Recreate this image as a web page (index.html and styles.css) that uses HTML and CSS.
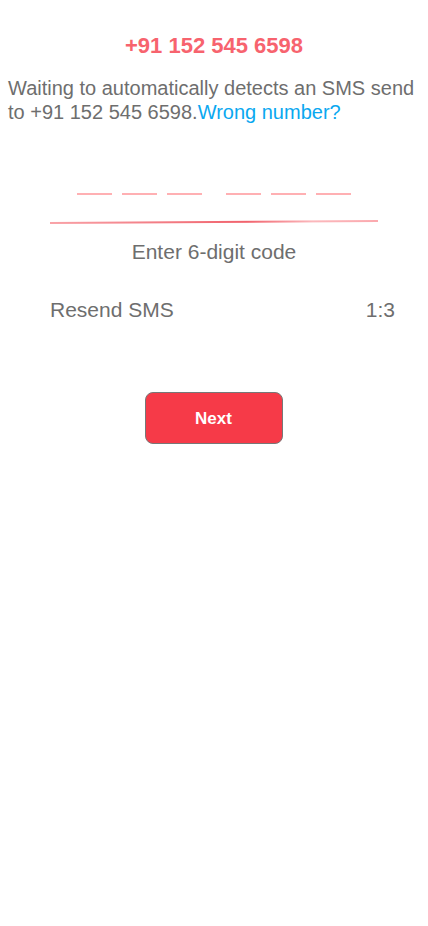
FILE: index.html
```html
<!DOCTYPE html>
<html>
<head>
<meta charset="utf-8">
<link rel="stylesheet" href="styles.css">
</head>
<body>
<div class="page">
  <h1 class="phone">+91 152 545 6598</h1>
  <p class="info">Waiting to automatically detects an SMS send to +91 152 545 6598.<a class="link" href="#">Wrong number?</a></p>
  <div class="code">
    <div class="dashes">
      <div class="group"><span class="dash"></span><span class="dash"></span><span class="dash"></span></div>
      <div class="group"><span class="dash"></span><span class="dash"></span><span class="dash"></span></div>
    </div>
    <div class="underline"></div>
    <div class="hint">Enter 6-digit code</div>
  </div>
  <div class="resend">
    <span>Resend SMS</span>
    <span>1:3</span>
  </div>
  <div class="actions">
    <button class="next">Next</button>
  </div>
</div>
</body>
</html>
```
FILE: styles.css
```css
html, body {
  margin: 0;
  padding: 0;
  background: #ffffff;
}
body {
  font-family: "Liberation Sans", Arial, sans-serif;
}
.page {
  padding: 34px 8px 0;
  display: flex;
  flex-direction: column;
}
.phone {
  margin: 0;
  text-align: center;
  font-size: 22px;
  line-height: 24px;
  font-weight: bold;
  color: #f7636e;
}
.info {
  margin: 18px 0 0;
  font-size: 20px;
  line-height: 24px;
  color: #6e6e6e;
}
.link {
  color: #0aa8f0;
  text-decoration: none;
}
.code {
  margin-top: 69px;
  display: flex;
  flex-direction: column;
  align-items: center;
}
.dashes {
  display: flex;
  gap: 24px;
}
.group {
  display: flex;
  gap: 10px;
}
.dash {
  display: block;
  width: 35px;
  height: 2px;
  background: #ffb0b3;
}
.underline {
  margin-top: 26px;
  width: 328px;
  height: 1.5px;
  background: linear-gradient(90deg, #f9a3a8 0%, #f38088 30%, #f1636d 60%, #fbb8bc 80%, #fba9ae 100%);
  transform: rotate(-0.35deg);
}
.hint {
  margin-top: 17px;
  font-size: 21px;
  line-height: 24px;
  color: #6e6e6e;
}
.resend {
  margin: 34px 25px 0 42px;
  display: flex;
  justify-content: space-between;
  font-size: 21px;
  line-height: 24px;
  color: #6e6e6e;
}
.actions {
  margin-top: 70px;
  display: flex;
  justify-content: center;
}
.next {
  width: 138px;
  height: 52px;
  border: 1px solid #777777;
  border-radius: 8px;
  background: #f63a48;
  color: #ffffff;
  font-family: "Liberation Sans", Arial, sans-serif;
  font-size: 17px;
  font-weight: bold;
  margin-left: -1px;
  padding-top: 3px;
}
```
